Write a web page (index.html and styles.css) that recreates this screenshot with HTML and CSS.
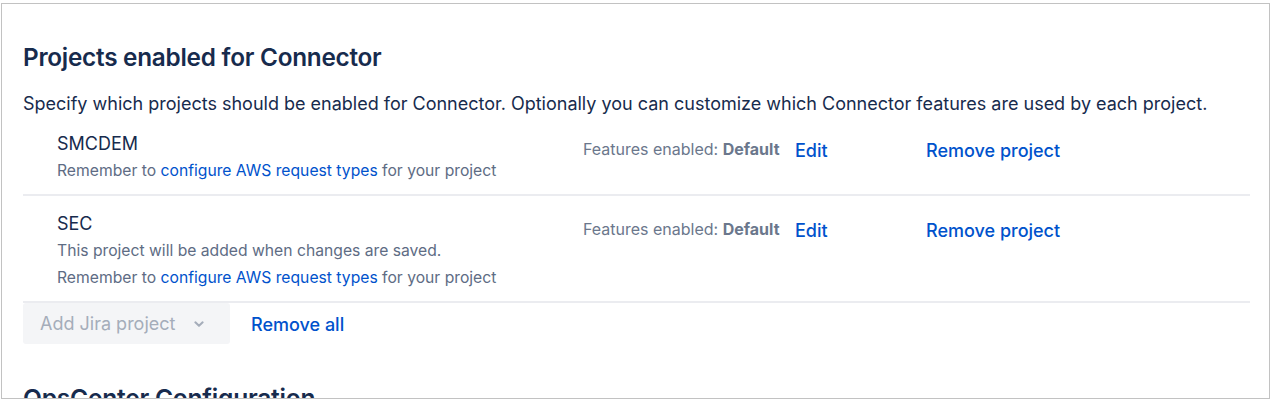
FILE: index.html
```html
<!DOCTYPE html>
<html lang="en">
<head>
    <meta charset="UTF-8">
    <meta name="viewport" content="width=device-width, initial-scale=1.0">
    <title>Connector Settings</title>
    <link rel="stylesheet" href="styles.css">
</head>
<body>
    <div class="settings-frame">
        <h2 class="section-title">Projects enabled for Connector</h2>
        <p class="section-desc">Specify which projects should be enabled for Connector. Optionally you can customize which Connector features are used by each project.</p>

        <div class="project-list">
            <div class="project-row">
                <div class="project-info">
                    <div class="project-name">SMCDEM</div>
                    <div class="project-note">Remember to <a href="#">configure AWS request types</a> for your project</div>
                </div>
                <div class="project-features">Features enabled: <strong>Default</strong></div>
                <a href="#" class="project-edit">Edit</a>
                <a href="#" class="project-remove">Remove project</a>
            </div>
            <div class="project-row">
                <div class="project-info">
                    <div class="project-name">SEC</div>
                    <div class="project-note">This project will be added when changes are saved.</div>
                    <div class="project-note">Remember to <a href="#">configure AWS request types</a> for your project</div>
                </div>
                <div class="project-features">Features enabled: <strong>Default</strong></div>
                <a href="#" class="project-edit">Edit</a>
                <a href="#" class="project-remove">Remove project</a>
            </div>
        </div>

        <div class="project-actions">
            <div class="project-select">
                <span>Add Jira project</span>
                <svg width="22" height="22" viewBox="0 0 24 24"><path d="M8 10.2l4 3.8 4-3.8" fill="none" stroke="#a5adba" stroke-width="2.2" stroke-linecap="round" stroke-linejoin="round"/></svg>
            </div>
            <a href="#" class="remove-all">Remove all</a>
        </div>

        <h2 class="section-title next-section">OpsCenter Configuration</h2>
    </div>
</body>
</html>
```

FILE: styles.css
```css
body {
    margin: 0;
    padding: 0;
    background-color: #ffffff;
    font-family: Inter, "Noto Sans", sans-serif;
    color: #172b4d;
}

.settings-frame {
    position: relative;
    margin: 3px 2px 0 1px;
    height: 396px;
    box-sizing: border-box;
    border: 1px solid #c2c2c2;
    padding: 0 19px 0 21px;
    overflow: hidden;
}

.settings-frame::before {
    content: "";
    position: absolute;
    top: -2px;
    left: 21px;
    right: 18px;
    height: 2px;
    background-color: #ececec;
}

.section-title {
    margin: 39px 0 0;
    font-size: 24.3px;
    line-height: 28px;
    font-weight: 600;
    letter-spacing: -0.01em;
    color: #172b4d;
}

.section-desc {
    margin: 21px 0 0;
    font-size: 18px;
    line-height: 24px;
}

.project-row {
    display: flex;
    align-items: flex-start;
    padding: 14px 0 10px 34px;
    border-bottom: 2px solid #ebecf0;
}

.project-info {
    width: 526px;
}

.project-name {
    font-size: 18px;
    line-height: 27px;
}

.project-note {
    font-size: 15.7px;
    line-height: 27px;
    color: #5e6c84;
}

.project-note a {
    color: #0052cc;
    text-decoration: none;
}

.project-features {
    width: 212px;
    margin-top: 9px;
    font-size: 16px;
    line-height: 20px;
    color: #6b778c;
}

.project-features strong {
    font-weight: 700;
}

.project-edit,
.project-remove,
.remove-all {
    font-size: 18px;
    line-height: 20px;
    font-weight: 500;
    color: #0052cc;
    text-decoration: none;
}

.project-edit {
    width: 131px;
    margin-top: 11px;
}

.project-remove {
    margin-top: 11px;
}

.project-actions {
    display: flex;
    align-items: center;
    gap: 21px;
}

.project-select {
    display: flex;
    align-items: center;
    justify-content: space-between;
    width: 207px;
    height: 41px;
    box-sizing: border-box;
    padding: 0 20px 0 17px;
    background-color: #f4f5f7;
    border-radius: 3px;
    font-size: 18px;
    color: #a5adba;
}

.project-select svg {
    display: block;
}

.remove-all {
    padding-top: 3px;
}

.next-section {
    margin-top: 40px;
    font-size: 24.6px;
}
```
